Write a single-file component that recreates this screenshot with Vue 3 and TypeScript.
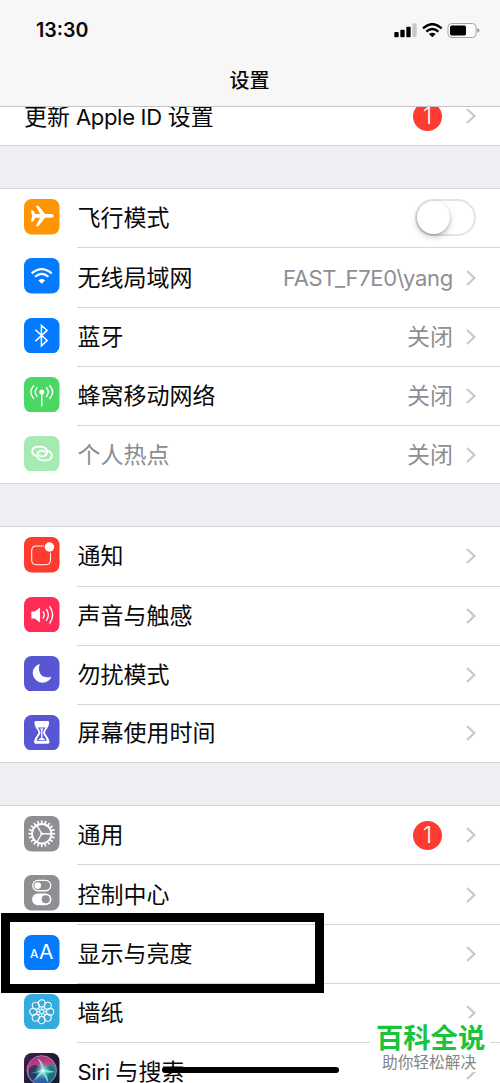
<script setup lang="ts">
interface Row {
  id: string
  label: string
  color?: string
  value?: string
  badge?: string
  toggle?: boolean
  disabled?: boolean
}

const groups: Row[][] = [
  [{ id: 'update', label: '更新 Apple ID 设置', badge: '1' }],
  [
    { id: 'plane', label: '飞行模式', color: '#ff9502', toggle: true },
    { id: 'wifi', label: '无线局域网', color: '#047afe', value: 'FAST_F7E0\\yang' },
    { id: 'bluetooth', label: '蓝牙', color: '#047afe', value: '关闭' },
    { id: 'cellular', label: '蜂窝移动网络', color: '#4bd763', value: '关闭' },
    { id: 'hotspot', label: '个人热点', color: '#a5ebb1', value: '关闭', disabled: true },
  ],
  [
    { id: 'notice', label: '通知', color: '#fd3b2f' },
    { id: 'sound', label: '声音与触感', color: '#fd2d55' },
    { id: 'moon', label: '勿扰模式', color: '#5856d3' },
    { id: 'hourglass', label: '屏幕使用时间', color: '#5856d3' },
  ],
  [
    { id: 'gear', label: '通用', color: '#8e8e93', badge: '1' },
    { id: 'control', label: '控制中心', color: '#8e8e93' },
    { id: 'display', label: '显示与亮度', color: '#047afe' },
    { id: 'wallpaper', label: '墙纸', color: '#35aadc' },
    { id: 'siri', label: 'Siri 与搜索', color: '#211d38' },
  ],
]

const teeth = Array.from({ length: 20 }, (_, i) => i * 18)
const petals = Array.from({ length: 8 }, (_, i) => i * 45)

// Latin runs are set slightly tighter than the Chinese around them.
const runs = (label: string): string[] => label.match(/[\x20-\x7e]+|[^\x20-\x7e]+/g) ?? []
const isLatin = (run: string): boolean => /[A-Za-z]/.test(run)
</script>

<template>
  <main class="phone">
    <header class="header">
      <div class="status">
        <span class="time">13:30</span>
        <svg class="status-icons" width="86" height="16" viewBox="0 0 258 48">
          <rect x="1" y="27" width="13" height="16" rx="3" />
          <rect x="19" y="20" width="13" height="23" rx="3" />
          <rect x="37" y="11" width="13" height="32" rx="3" />
          <rect x="55" y="1" width="13" height="42" rx="3" fill="#c9c9c9" />
          <g fill="none" stroke="#000" stroke-width="7.5">
            <path d="M87 16 Q115 -9 143 16" />
            <path d="M97 26 Q115 10 133 26" />
          </g>
          <path d="M105 33 Q115 26 125 33 L115 43Z" />
          <rect x="162" y="1.500" width="84" height="42" rx="11" fill="#fbfbfb" stroke="#a5a5a5" stroke-width="3" />
          <rect x="168" y="7.500" width="48" height="30" rx="5" />
          <path d="M250 15 Q256 17 256 22 Q256 27 250 29Z" fill="#8e8e8e" />
        </svg>
      </div>
      <h1 class="title">设置</h1>
    </header>

    <section v-for="(group, g) in groups" :key="g" class="group">
      <div v-for="row in group" :key="row.id" class="row" :class="{ disabled: row.disabled, plain: !row.color }">
        <svg v-if="row.color" class="icon" viewBox="0 0 106 106">
          <defs v-if="row.id === 'siri'">
            <linearGradient id="siriBack" x1="0" y1="0" x2="1" y2="1">
              <stop offset="0" stop-color="#431a52" /><stop offset=".5" stop-color="#211b38" /><stop offset="1" stop-color="#101a2c" />
            </linearGradient>
            <linearGradient id="siriOrb" x1=".2" y1="0" x2=".5" y2="1">
              <stop offset="0" stop-color="#97306f" /><stop offset=".35" stop-color="#c63d81" /><stop offset=".55" stop-color="#477c9c" /><stop offset="1" stop-color="#2459ad" />
            </linearGradient>
            <radialGradient id="siriGlow">
              <stop offset="0" stop-color="#fff" /><stop offset=".3" stop-color="#a5ece9" stop-opacity=".7" /><stop offset="1" stop-color="#42d8ce" stop-opacity="0" />
            </radialGradient>
          </defs>
          <rect width="106" height="106" rx="23" :fill="row.id === 'siri' ? 'url(#siriBack)' : row.color" />

          <path
            v-if="row.id === 'plane'" fill="#fff"
            d="M21 34 L27 34 L34 45 L48 45 L35 20 L43 20 L63 45 L82 45 Q89 46 89 50.500 Q89 55 82 56 L63 56 L43 81 L35 81 L48 56 L34 56 L27 67 L21 67 L24 50.500Z"
          />
          <g v-else-if="row.id === 'wifi'" fill="none" stroke="#fff" stroke-width="6.500">
            <path d="M23 46 Q53 20 83 46" />
            <path d="M33 56 Q53 39 73 56" />
            <path d="M43 67 Q53 59 63 67 L53 77Z" fill="#fff" stroke="none" />
          </g>
          <path v-else-if="row.id === 'bluetooth'" fill="none" stroke="#fff" stroke-width="4.500" d="M34 35 L69 67 L52 83 L52 22 L69 37 L34 69" />
          <g v-else-if="row.id === 'cellular'" fill="none" stroke="#fff" stroke-width="4.200" stroke-linecap="round">
            <path d="M53 46 V86" />
            <circle cx="53" cy="45" r="7.500" fill="#fff" stroke="none" />
            <path d="M39 32 Q28 45 39 58 M67 32 Q78 45 67 58 M29 26 Q12 45 29 64 M77 26 Q94 45 77 64" />
          </g>
          <g v-else-if="row.id === 'hotspot'" fill="none" stroke="#fff" stroke-width="5.500" stroke-linecap="round">
            <path d="M40 60 C21 58 19 34 39 32 H51 C71 33 76 57 56 61 C50 62 47 60 46 57" />
            <path d="M69 44 C87 47 88 70 68 73 H56 C36 71 33 48 52 44 C58 43 61 45 62 48" />
          </g>
          <g v-else-if="row.id === 'notice'" fill="none" stroke="#fff">
            <path stroke-width="3" d="M60 27 H37 Q23 27 23 41 V69 Q23 83 37 83 H65 Q79 83 79 69 V47" />
            <circle cx="76" cy="30" r="14" fill="#fff" stroke="none" />
          </g>
          <g v-else-if="row.id === 'sound'" fill="none" stroke="#fff" stroke-width="4.200" stroke-linecap="round">
            <path d="M22 43 H32 L48 31 V76 L32 64 H22Z" fill="#fff" stroke="none" />
            <path d="M57 44 Q64 53 57 63 M67 37 Q78 53 67 70 M77 29 Q94 53 77 78" />
          </g>
          <path v-else-if="row.id === 'moon'" fill="#fff" d="M47 24 C39 48 52 70 82 62 C75 80 50 86 35 71 C19 54 26 31 47 24Z" />
          <g v-else-if="row.id === 'hourglass'">
            <path fill="#fff" d="M35 18 H71 Q76 18 75 25 C73 40 63 46 63 52 C63 58 73 64 76 79 Q77 86 71 86 H35 Q29 86 30 79 C33 64 43 58 43 52 C43 46 33 40 31 25 Q30 18 35 18Z" />
            <path fill="#5856d3" d="M42 37 H64 C62 44 57 46 57 52 C57 60 66 64 68 77 H38 C40 64 49 60 49 52 C49 46 44 44 42 37Z" />
            <path fill="#fff" d="M46 40 H60 L55 45 V68 Q62 70 63 75 H43 Q44 70 51 68 V45Z" />
          </g>
          <g v-else-if="row.id === 'gear'" fill="none" stroke="#fff">
            <circle cx="53" cy="53" r="29" stroke-width="5.500" />
            <path v-for="a in teeth" :key="a" d="M53 24 V13" stroke-width="5" :transform="`rotate(${a} 53 53)`" />
            <path d="M53 53 H80 M53 53 L39 29 M53 53 L39 77" stroke-width="4" />
            <circle cx="53" cy="53" r="4" fill="#fff" stroke="none" />
          </g>
          <g v-else-if="row.id === 'control'">
            <rect x="26" y="16" width="54" height="31" rx="15.500" fill="none" stroke="#fff" stroke-width="3.800" />
            <circle cx="41" cy="31.500" r="10" fill="#fff" />
            <rect x="24" y="55" width="58" height="35" rx="17.500" fill="#fff" />
            <circle cx="65" cy="72.500" r="12" fill="#8e8e93" />
          </g>
          <g v-else-if="row.id === 'display'" fill="#fff" class="letters">
            <text x="18" y="70" font-size="35" font-weight="500">A</text>
            <text x="45" y="73" font-size="58" textLength="43" lengthAdjust="spacingAndGlyphs">A</text>
          </g>
          <g v-else-if="row.id === 'wallpaper'" fill="none" stroke="#fff" stroke-width="3.300">
            <ellipse v-for="a in petals" :key="a" cx="53" cy="28" rx="10.500" ry="11" :transform="`rotate(${a} 53 53)`" />
            <circle v-for="a in petals" :key="`inner${a}`" cx="53" cy="42" r="5" stroke-width="2" :transform="`rotate(${a + 22.5} 53 53)`" />
            <circle cx="53" cy="53" r="6" stroke-width="2" />
          </g>
          <g v-else-if="row.id === 'siri'">
            <circle cx="53" cy="52" r="44" fill="url(#siriOrb)" stroke="#ad91ad" stroke-width="2.500" />
            <path d="M55 49 Q35 25 15 46 Q9 68 27 82Z" fill="#1b294d" opacity=".75" />
            <path d="M57 50 Q85 25 92 52 Q92 78 70 86Z" fill="#13786f" opacity=".8" />
            <path d="M18 61 Q43 57 54 48 Q48 28 40 15 Q57 25 60 48 Q79 54 92 56 Q73 62 61 56 Q72 70 72 88 Q61 71 56 59 Q44 72 30 83 Q44 61 49 56Z" fill="#8cf0ec" opacity=".85" />
            <circle cx="56" cy="53" r="25" fill="url(#siriGlow)" />
          </g>
        </svg>

        <div class="body">
          <span class="label"><span v-for="(run, i) in runs(row.label)" :key="i" :class="{ latin: isLatin(run) }">{{ run }}</span></span>
          <span v-if="row.value" class="value" :class="{ latin: isLatin(row.value) }">{{ row.value }}</span>
          <span v-if="row.badge" class="badge">{{ row.badge }}</span>
          <span v-if="row.toggle" class="toggle"><i class="knob"></i></span>
          <svg v-else class="chevron" width="11" height="18" viewBox="0 0 11 18">
            <path d="M2 2 L9.500 9 L2 16" fill="none" stroke="#c7c7cb" stroke-width="2.100" />
          </svg>
        </div>
      </div>
    </section>

    <div class="highlight"></div>
    <div class="home-bar"></div>
    <aside class="mark">
      <strong>百科全说</strong>
      <span>助你轻松解决</span>
    </aside>
  </main>
</template>

<style>
body {
  margin: 0;
  background: #efeff4;
}
</style>

<style scoped>
.phone {
  position: relative;
  box-sizing: border-box;
  width: 500px;
  height: 1083px;
  padding-top: 86px;
  overflow: hidden;
  background: #eeeef3;
  color: #090909;
  font-family: Inter, "Noto Sans CJK SC", sans-serif;
}
.header {
  position: absolute;
  z-index: 2;
  inset: 0 0 auto;
  height: 106px;
  border-bottom: 1px solid #c3c3c5;
  background: #f7f7f7;
}
.status {
  display: flex;
  justify-content: space-between;
  height: 60px;
  padding: 0 20px 0 36px;
}
.time {
  font-size: 19.600px;
  font-weight: 600;
  line-height: 61px;
}
.status-icons {
  margin-top: 22.500px;
}
.title {
  margin: 0;
  font-size: 20px;
  font-weight: 500;
  line-height: 42px;
  text-align: center;
  text-indent: -1px;
}
.group {
  box-sizing: border-box;
  margin-bottom: 42.300px;
  border-top: 1px solid #d5d5d9;
  border-bottom: 1px solid #d5d5d9;
  background: #fff;
}
.row {
  display: flex;
  box-sizing: border-box;
  height: 59.160px;
  padding-left: 24px;
}
.row:last-child {
  height: 57.160px;
}
.row.plain {
  height: 58px;
}
.icon {
  flex: none;
  width: 35.500px;
  height: 35.500px;
  margin: 10px 17.500px 0 0;
}
.letters {
  font-family: Inter, sans-serif;
}
.body {
  display: flex;
  flex: 1;
  align-items: center;
  box-sizing: border-box;
  padding-right: 24px;
  border-bottom: 1px solid #d6d6d9;
}
.row:last-child .body {
  border-bottom: 0;
}
.label {
  margin-right: auto;
  padding-left: 0.500px;
  font-size: 23px;
  line-height: 34px;
  white-space: pre;
}
.plain .label {
  padding-top: 1px;
  padding-left: 0;
}
.value {
  margin-right: 12px;
  color: #8e8e93;
  font-size: 23px;
  line-height: 34px;
}
.latin {
  font-size: 22px;
  letter-spacing: -0.300px;
}
.disabled .label {
  color: #8c8c8c;
}
.badge {
  width: 29px;
  height: 29px;
  margin-right: 23px;
  border-radius: 50%;
  background: #fd3b30;
  color: #fff;
  font-size: 23px;
  font-weight: 300;
  line-height: 29px;
  text-align: center;
}
.chevron {
  flex: none;
}
.toggle {
  box-sizing: border-box;
  width: 61px;
  height: 37px;
  margin-top: -1px;
  border: 2px solid #e3e3e3;
  border-radius: 19px;
}
.knob {
  display: block;
  width: 33px;
  height: 33px;
  border-radius: 50%;
  background: #fff;
  box-shadow: 0 3px 6px rgba(0, 0, 0, 0.22), 0 1px 2px rgba(0, 0, 0, 0.2);
}
.highlight {
  position: absolute;
  top: 913px;
  left: 1px;
  box-sizing: border-box;
  width: 322.500px;
  height: 80px;
  border: 9px solid #000;
}
.home-bar {
  position: absolute;
  top: 1067px;
  left: 162px;
  width: 177px;
  height: 6px;
  border-radius: 3px;
  background: #000;
}
.mark {
  position: absolute;
  top: 1018px;
  left: 370px;
  display: flex;
  flex-direction: column;
  width: 120px;
  height: 54px;
  background: #fff;
  white-space: nowrap;
}
.mark strong {
  margin-left: 6px;
  color: #18c43c;
  font-size: 27.300px;
  font-weight: 700;
  line-height: 42px;
}
.mark span {
  margin: -7px 0 0 12px;
  color: #858585;
  font-size: 15.700px;
  line-height: 20px;
}
</style>
